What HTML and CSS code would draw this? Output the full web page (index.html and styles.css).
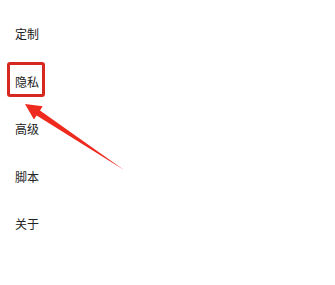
FILE: index.html
```html
<!DOCTYPE html>
<html lang="zh">
<head>
<meta charset="utf-8">
<link rel="stylesheet" href="styles.css">
</head>
<body>
<ul class="menu">
  <li class="item">定制</li>
  <li class="item">隐私</li>
  <li class="item">高级</li>
  <li class="item">脚本</li>
  <li class="item">关于</li>
</ul>
<div class="highlight"></div>
<svg class="arrow" width="335" height="285" viewBox="0 0 335 285">
  <polygon points="25,104 42.7,106.2 40,110.4 124,170 36.6,115.4 33.9,119.6" fill="#ee2a1e"/>
</svg>
</body>
</html>
```
FILE: styles.css
```css
html, body {
  margin: 0;
  padding: 0;
  background: #ffffff;
}
body {
  width: 335px;
  height: 285px;
  overflow: hidden;
  position: relative;
  font-family: "Noto Sans CJK SC", "Noto Sans", sans-serif;
}
.menu {
  list-style: none;
  margin: 0;
  padding: 10px 0 0 15px;
}
.item {
  height: 47.6px;
  line-height: 47.6px;
  font-size: 12px;
  color: #222222;
}
.highlight {
  position: absolute;
  left: 7px;
  top: 62px;
  width: 32px;
  height: 29px;
  border: 3px solid #d7281f;
  border-radius: 3px;
}
.arrow {
  position: absolute;
  left: 0;
  top: 0;
}
```
